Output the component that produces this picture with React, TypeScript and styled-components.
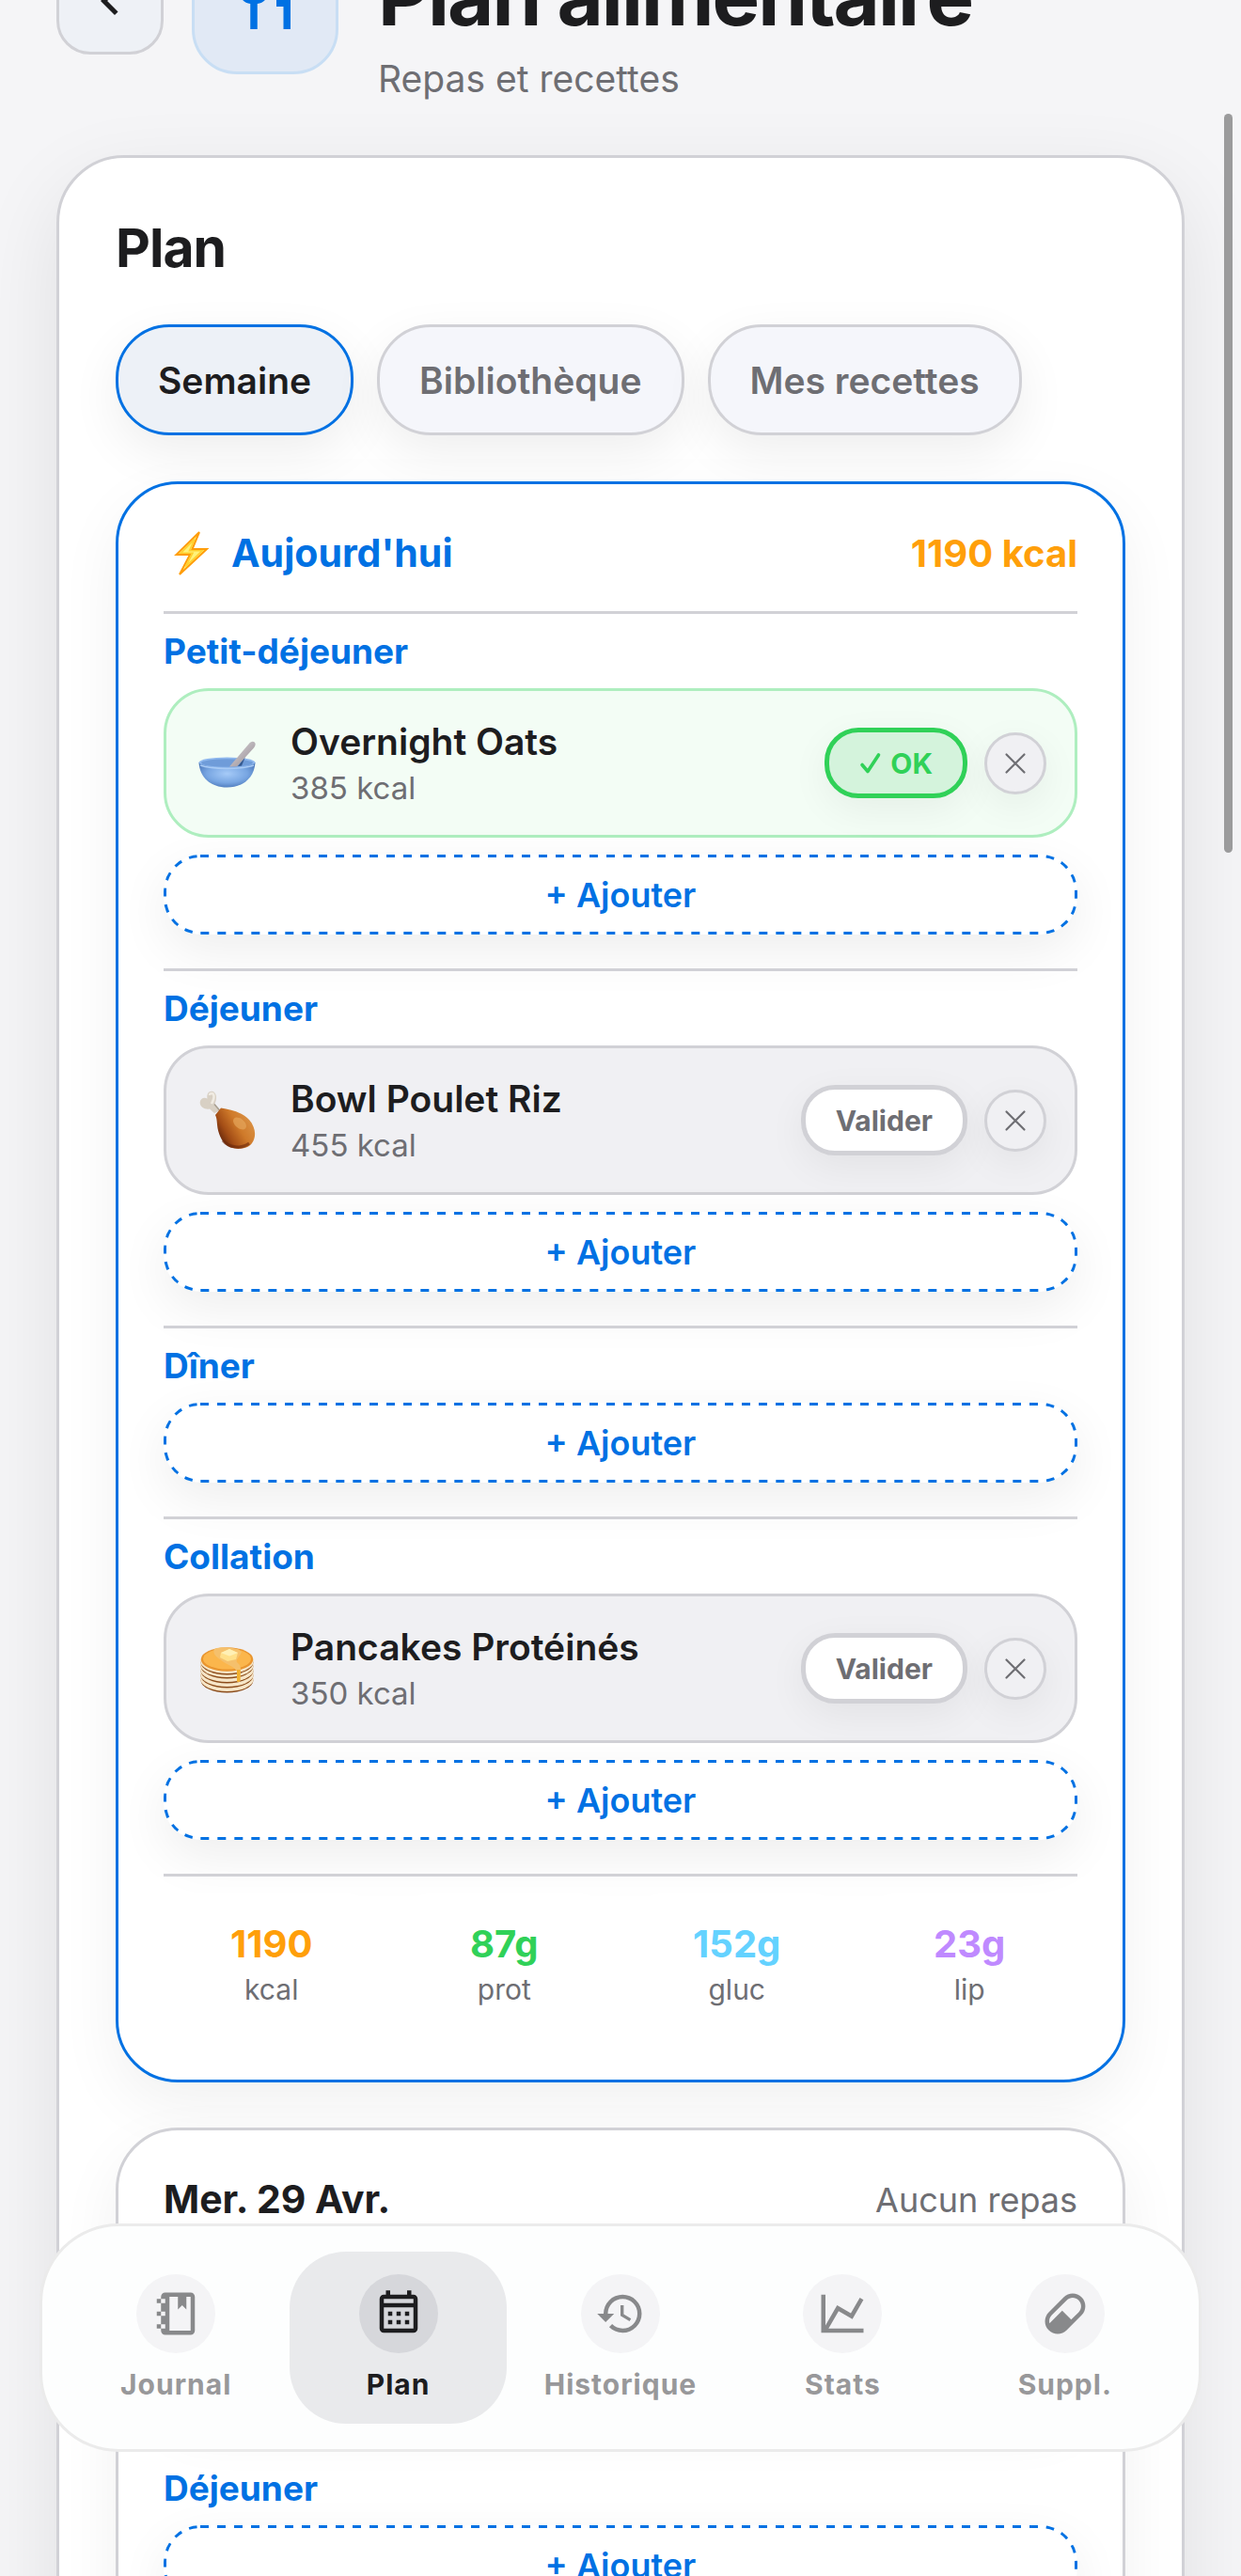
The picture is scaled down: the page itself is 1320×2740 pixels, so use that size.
import React, { useState } from 'react'
import styled, { createGlobalStyle, css } from 'styled-components'

type MealArt = 'bowl' | 'drumstick' | 'pancakes'

type Meal = {
    name: string
    kcal: number
    art: MealArt
    done: boolean
}

type Slot = {
    label: string
    meals: Meal[]
}

type Macro = {
    value: string
    unit: string
    color: string
}

const colors = {
    page: '#f5f5f7',
    blue: '#0071e3',
    green: '#30d158',
    orange: '#ff9f0a',
    text: '#1d1d1f',
    muted: '#6e6e73',
    border: '#d1d1d6',
    fill: '#f0f0f3',
}

const icons = {
    back: 'M15.41,16.58L10.83,12L15.41,7.41L14,6L8,12L14,18L15.41,16.58Z',
    silverware:
        'M11,9H9V2H7V9H5V2H3V9C3,11.12 4.66,12.84 6.75,12.97V22H9.25V12.97C11.34,12.84 13,11.12 13,9V2H11V9M16,6V14H18.5V22H21V2C18.24,2 16,4.24 16,6Z',
    notebook:
        'M3 7V5H5V4C5 2.9 5.9 2 7 2H19C20.1 2 21 2.9 21 4V20C21 21.1 20.1 22 19 22H7C5.9 22 5 21.1 5 20V19H3V17H5V13H3V11H5V7H3M5 5V7H7V5H5M5 19H7V17H5V19M5 13H7V11H5V13M17 4V10L15 8L13 10V4H9V20H19V4H17Z',
    calendar:
        'M7 11H9V13H7V11M21 5V19C21 20.11 20.11 21 19 21H5C3.89 21 3 20.1 3 19V5C3 3.9 3.9 3 5 3H6V1H8V3H16V1H18V3H19C20.11 3 21 3.9 21 5M5 7H19V5H5V7M19 19V9H5V19H19M15 13V11H17V13H15M11 13V11H13V13H11M7 15H9V17H7V15M15 17V15H17V17H15M11 17V15H13V17H11Z',
    history:
        'M13.5,8H12V13L16.28,15.54L17,14.33L13.5,12.25V8M13,3A9,9 0 0,0 4,12H1L4.96,16.03L9,12H6A7,7 0 0,1 13,5A7,7 0 0,1 20,12A7,7 0 0,1 13,19C11.07,19 9.32,18.21 8.06,16.94L6.64,18.36C8.27,20 10.5,21 13,21A9,9 0 0,0 22,12A9,9 0 0,0 13,3',
    chart: 'M16,11.78L20.24,4.45L21.97,5.45L16.74,14.5L10.23,10.75L5.46,19H22V21H2V3H4V17.54L9.5,8L16,11.78Z',
    pill: 'M4.22,11.29L11.29,4.22C13.64,1.88 17.43,1.88 19.78,4.22C22.12,6.56 22.12,10.36 19.78,12.71L12.71,19.78C10.36,22.12 6.56,22.12 4.22,19.78C1.88,17.43 1.88,13.64 4.22,11.29M5.64,12.71C4.59,13.75 4.24,15.24 4.6,16.57L10.59,10.59L14.83,14.83L18.36,11.29C19.93,9.73 19.93,7.2 18.36,5.64C16.8,4.07 14.27,4.07 12.71,5.64L5.64,12.71Z',
}

// native dashed borders give no control over the dash length
const dashedOutline = `url("data:image/svg+xml,%3Csvg xmlns='http://www.w3.org/2000/svg' width='100%25' height='100%25'%3E%3Crect width='100%25' height='100%25' fill='none' rx='39' ry='39' stroke='%230071e3' stroke-width='6' stroke-dasharray='9 9'/%3E%3C/svg%3E")`

const tabs = ['Semaine', 'Bibliothèque', 'Mes recettes']

const today: Slot[] = [
    {
        label: 'Petit-déjeuner',
        meals: [{ name: 'Overnight Oats', kcal: 385, art: 'bowl', done: true }],
    },
    {
        label: 'Déjeuner',
        meals: [{ name: 'Bowl Poulet Riz', kcal: 455, art: 'drumstick', done: false }],
    },
    { label: 'Dîner', meals: [] },
    {
        label: 'Collation',
        meals: [{ name: 'Pancakes Protéinés', kcal: 350, art: 'pancakes', done: false }],
    },
]

const emptyDay: Slot[] = ['Petit-déjeuner', 'Déjeuner', 'Dîner', 'Collation'].map(
    (label) => ({ label, meals: [] })
)

const macros: Macro[] = [
    { value: '1190', unit: 'kcal', color: colors.orange },
    { value: '87g', unit: 'prot', color: colors.green },
    { value: '152g', unit: 'gluc', color: '#64d2ff' },
    { value: '23g', unit: 'lip', color: '#bf8aff' },
]

const navItems = [
    { label: 'Journal', icon: icons.notebook },
    { label: 'Plan', icon: icons.calendar },
    { label: 'Historique', icon: icons.history },
    { label: 'Stats', icon: icons.chart },
    { label: 'Suppl.', icon: icons.pill },
]

function Icon({ path, size }: { path: string; size: number }) {
    return (
        <svg width={size} height={size} viewBox="0 0 24 24" fill="currentColor" aria-hidden>
            <path d={path} />
        </svg>
    )
}

function Bolt() {
    return (
        <svg width="60" height="60" viewBox="0 0 60 60" aria-hidden>
            <path
                d="M38 7L13.5 31H28L17 52L46 25H30.500Z"
                fill="#fff27a"
                stroke="#ff9d0a"
                strokeWidth="2"
                strokeLinejoin="miter"
            />
            <path
                d="M33 14.500L18.500 29.200H31L23.500 43.500L41 26.800H27.500Z"
                fill="none"
                stroke="#ffd02e"
                strokeWidth="1.600"
            />
        </svg>
    )
}

function Bowl() {
    return (
        <svg width="66" height="66" viewBox="0 0 66 66" aria-hidden>
            <defs>
                <radialGradient id="bowlBody" cx="0.5" cy="0.45" r="0.6">
                    <stop offset="0" stopColor="#a6cbf8" />
                    <stop offset="0.6" stopColor="#78a6e2" />
                    <stop offset="1" stopColor="#4a76b8" />
                </radialGradient>
                <linearGradient id="bowlSpoon" x1="0" y1="0" x2="1" y2="1">
                    <stop offset="0" stopColor="#dedcdf" />
                    <stop offset="1" stopColor="#93888f" />
                </linearGradient>
            </defs>
            <path d="M4.5 32C5.5 48 17 58.5 34.5 58.5S63.5 48 64.5 32Z" fill="url(#bowlBody)" />
            <ellipse cx="34.5" cy="32" rx="30" ry="5.5" fill="#8fb8ee" />
            <ellipse cx="34.5" cy="32.5" rx="27.5" ry="4.3" fill="#6f9cd9" />
            <path d="M46 36L54 26L50 35.5Z" fill="#35598f" />
            <path
                d="M37 36.5L57.5 12.5C59.5 9.8 62 9 63.8 10.5C65.3 12 64.6 14.5 63 16.5L45 36.3Z"
                fill="url(#bowlSpoon)"
            />
            <path d="M6 35C18 39.5 51 39.5 63 35" fill="none" stroke="#a9cbf5" strokeWidth="1.5" />
        </svg>
    )
}

function Drumstick() {
    return (
        <svg width="66" height="66" viewBox="0 0 66 66" aria-hidden>
            <defs>
                <linearGradient id="drumMeat" x1="0.05" y1="0.75" x2="0.85" y2="0.25">
                    <stop offset="0" stopColor="#5c210a" />
                    <stop offset="0.3" stopColor="#a34d16" />
                    <stop offset="0.65" stopColor="#cf7a2a" />
                    <stop offset="1" stopColor="#d98f42" />
                </linearGradient>
            </defs>
            <path
                d="M21 25L16 20.5C11 21.5 5.5 18.5 5.7 13.5C6 9.5 10 7.5 13.5 9.5C12.5 4 15.5 1 19 1.8C23.5 3 24.5 10 21 16L27 22Z"
                fill="#d8d0c4"
            />
            <path d="M16 6C16 3.5 20 3 20.5 7C20.8 10 19 13 18 15" fill="none" stroke="#f0ebe2" strokeWidth="2.5" />
            <path d="M21 15.5L27 22.5" stroke="#a69c8d" strokeWidth="1.5" />
            <path
                d="M22 27L28 19.5C39 21 51 24.5 58 32C65 40 66 50 61 57C56 63.5 46 64 38 61.5C30 58 26 49 24.5 41C23.5 35 24 31 22 27Z"
                fill="url(#drumMeat)"
            />
            <path
                d="M30 54C36 61.5 50 63.5 58 57"
                fill="none"
                stroke="#6b280c"
                strokeOpacity="0.6"
                strokeWidth="3"
            />
            <ellipse cx="48" cy="36" rx="8" ry="5" transform="rotate(40 48 36)" fill="#e8ab62" fillOpacity="0.6" />
        </svg>
    )
}

function Pancakes() {
    return (
        <svg width="66" height="66" viewBox="0 0 66 66" aria-hidden>
            {[45, 40, 35, 30, 26].map((cy) => (
                <g key={cy}>
                    <ellipse cx="34.5" cy={cy} rx="28" ry="13.5" fill="#8c4c1a" />
                    <ellipse cx="34.5" cy={cy - 1} rx="28.3" ry="13" fill="#f6e6c8" />
                </g>
            ))}
            <ellipse cx="34.5" cy="23" rx="27.8" ry="12.8" fill="#e9952f" />
            <ellipse cx="34.5" cy="22.5" rx="25.5" ry="11" fill="#fbb64c" />
            <path
                d="M21 12C26 9 46 10 50 15C48 21 42 24 46 27C50 30 49 34 48.5 45C48 48 45 48 45 45V36C42 30 34 29 27 23C22 20 19 16 21 12Z"
                fill="#f5c06c"
            />
            <path d="M45 34V45C45 48 48.5 48 48.5 45V34Z" fill="#f2b12f" />
            <path d="M28 16L37 12L46 16L44 23L35 25L27 21Z" fill="#ffe08a" />
            <path d="M28 16L37 12L46 16L37 19.5Z" fill="#fff0b5" />
        </svg>
    )
}

const mealArt: { [key in MealArt]: () => React.JSX.Element } = {
    bowl: Bowl,
    drumstick: Drumstick,
    pancakes: Pancakes,
}

function MealRow({ meal }: { meal: Meal }) {
    const [done, setDone] = useState(meal.done)
    const Art = mealArt[meal.art]

    return (
        <Row $done={done}>
            <Art />
            <MealText>
                <MealName>{meal.name}</MealName>
                <MealKcal>{meal.kcal} kcal</MealKcal>
            </MealText>
            <Actions>
                <ValidateButton type="button" $done={done} onClick={() => setDone(!done)}>
                    {done && (
                        <svg width="24" height="24" viewBox="0 0 24 24" fill="none" aria-hidden>
                            <path
                                d="M3 13.5L9 20.5L20.5 3"
                                stroke="currentColor"
                                strokeWidth="3.6"
                                strokeLinecap="round"
                                strokeLinejoin="round"
                            />
                        </svg>
                    )}
                    {done ? 'OK' : 'Valider'}
                </ValidateButton>
                <RemoveButton type="button" aria-label={`Retirer ${meal.name}`}>
                    <svg width="24" height="24" viewBox="0 0 24 24" fill="none" aria-hidden>
                        <path
                            d="M2.5 2.5L21.5 21.5M21.5 2.5L2.5 21.5"
                            stroke="currentColor"
                            strokeWidth="2.2"
                            strokeLinecap="round"
                        />
                    </svg>
                </RemoveButton>
            </Actions>
        </Row>
    )
}

function MealSlot({ slot }: { slot: Slot }) {
    return (
        <Section>
            <SlotTitle>{slot.label}</SlotTitle>
            {slot.meals.map((meal) => (
                <MealRow key={meal.name} meal={meal} />
            ))}
            <AddButton type="button">+ Ajouter</AddButton>
        </Section>
    )
}

function App() {
    const [tab, setTab] = useState(tabs[0])

    return (
        <>
            <GlobalStyle />
            <Screen>
                <Header>
                    <BackButton type="button" aria-label="Retour">
                        <Icon path={icons.back} size={60} />
                    </BackButton>
                    <HeaderBadge>
                        <Icon path={icons.silverware} size={72} />
                    </HeaderBadge>
                    <HeaderText>
                        <PageTitle>Plan alimentaire</PageTitle>
                        <PageSubtitle>Repas et recettes</PageSubtitle>
                    </HeaderText>
                </Header>

                <PlanCard>
                    <CardTitle>Plan</CardTitle>
                    <Tabs>
                        {tabs.map((name) => (
                            <Tab
                                key={name}
                                type="button"
                                $active={name === tab}
                                onClick={() => setTab(name)}
                            >
                                {name}
                            </Tab>
                        ))}
                    </Tabs>

                    <Days>
                        <DayCard $today>
                            <DayHeader>
                                <DayTitle $today>
                                    <Bolt />
                                    Aujourd'hui
                                </DayTitle>
                                <DayTotal>1190 kcal</DayTotal>
                            </DayHeader>
                            {today.map((slot) => (
                                <MealSlot key={slot.label} slot={slot} />
                            ))}
                            <Macros>
                                {macros.map(({ value, unit, color }) => (
                                    <MacroBox key={unit}>
                                        <MacroValue $color={color}>{value}</MacroValue>
                                        <MacroUnit>{unit}</MacroUnit>
                                    </MacroBox>
                                ))}
                            </Macros>
                        </DayCard>

                        <DayCard>
                            <DayHeader>
                                <DayTitle>Mer. 29 Avr.</DayTitle>
                                <DayEmpty>Aucun repas</DayEmpty>
                            </DayHeader>
                            {emptyDay.map((slot) => (
                                <MealSlot key={slot.label} slot={slot} />
                            ))}
                        </DayCard>
                    </Days>
                </PlanCard>
            </Screen>

            <ScrollThumb />

            <BottomNav>
                {navItems.map(({ label, icon }) => (
                    <NavItem key={label} href={`#${label}`} $active={label === 'Plan'}>
                        <NavIcon $active={label === 'Plan'}>
                            <Icon path={icon} size={54} />
                        </NavIcon>
                        {label}
                    </NavItem>
                ))}
            </BottomNav>
        </>
    )
}

export default App

const GlobalStyle = createGlobalStyle`
    * {
        box-sizing: border-box;
    }

    body {
        margin: 0;
        overflow: hidden;
        background: ${colors.page};
        color: ${colors.text};
        font-family: Inter, 'Liberation Sans', sans-serif;
    }

    button {
        margin: 0;
        font-family: inherit;
        cursor: pointer;
    }

    h1, h2, h3, h4, p {
        margin: 0;
    }

    svg {
        display: block;
        flex-shrink: 0;
    }
`

const Screen = styled.main`
    height: 100vh;
    overflow: hidden;
    padding: 0 60px;
`

/* starts scrolled partly out of view */
const Header = styled.header`
    display: flex;
    align-items: center;
    gap: 30px;
    height: 220px;
    margin-top: -109px;
    margin-bottom: 54px;
`

const BackButton = styled.button`
    display: flex;
    align-items: center;
    justify-content: center;
    width: 114px;
    height: 114px;
    padding: 0;
    border: 3px solid ${colors.border};
    border-radius: 36px;
    background: #eef1f6;
    color: ${colors.text};
`

const HeaderBadge = styled.div`
    display: flex;
    align-items: center;
    justify-content: center;
    width: 156px;
    height: 156px;
    border: 3px solid #c8def4;
    border-radius: 48px;
    background: #e1e9f5;
    color: ${colors.blue};
`

const HeaderText = styled.div`
    display: flex;
    flex-direction: column;
    align-self: flex-end;
    gap: 12px;
    padding-left: 12px;
`

const PageTitle = styled.h1`
    font-size: 85px;
    line-height: 96px;
    font-weight: 700;
    letter-spacing: -2px;
`

const PageSubtitle = styled.p`
    font-size: 39px;
    line-height: 54px;
    color: ${colors.muted};
`

const PlanCard = styled.section`
    padding: 60px;
    border: 3px solid ${colors.border};
    border-radius: 72px;
    background: #fff;
    box-shadow: 0 30px 90px rgba(0, 0, 0, 0.09);
`

const CardTitle = styled.h2`
    font-size: 57px;
    line-height: 72px;
    font-weight: 700;
    letter-spacing: -1px;
`

const Tabs = styled.div`
    display: flex;
    gap: 25px;
    margin-top: 45px;
`

const Tab = styled.button<{ $active: boolean }>`
    height: 118px;
    padding: 0 42px;
    border: 3px solid ${({ $active }) => ($active ? colors.blue : colors.border)};
    border-radius: 57px;
    background: ${({ $active }) => ($active ? '#edf1f7' : '#f5f6fb')};
    box-shadow: 0 18px 54px rgba(0, 0, 0, 0.07);
    color: ${({ $active }) => ($active ? colors.text : colors.muted)};
    font-size: 39px;
    font-weight: 600;
`

const Days = styled.div`
    display: flex;
    flex-direction: column;
    gap: 48px;
    margin-top: 49px;
`

const DayCard = styled.article<{ $today?: boolean }>`
    padding: 48px;
    border: 3px solid ${({ $today }) => ($today ? colors.blue : colors.border)};
    border-radius: 66px;
    background: #fff;
    box-shadow: 0 24px 66px rgba(0, 0, 0, 0.06);
`

const DayHeader = styled.header`
    display: flex;
    align-items: center;
    justify-content: space-between;
    height: 51px;
    margin-bottom: 36px;
`

const DayTitle = styled.h3<{ $today?: boolean }>`
    display: flex;
    align-items: center;
    gap: 12px;
    color: ${({ $today }) => ($today ? colors.blue : colors.text)};
    font-size: 41px;
    line-height: 51px;
    font-weight: 700;
`

const DayTotal = styled.span`
    color: ${colors.orange};
    font-size: 40px;
    font-weight: 700;
`

const DayEmpty = styled.span`
    color: ${colors.muted};
    font-size: 36px;
`

const Section = styled.section`
    padding: 18px 0 36px;
    border-top: 3px solid ${colors.border};
`

const SlotTitle = styled.h4`
    margin-bottom: 18px;
    color: ${colors.blue};
    font-size: 37px;
    line-height: 43px;
    font-weight: 700;
`

const Row = styled.div<{ $done: boolean }>`
    display: flex;
    align-items: center;
    gap: 36px;
    height: 159px;
    margin-bottom: 18px;
    padding: 0 30px;
    border: 3px solid ${({ $done }) => ($done ? '#aeeebf' : colors.border)};
    border-radius: 48px;
    background: ${({ $done }) => ($done ? '#f3fdf5' : colors.fill)};
`

const MealText = styled.div`
    flex: 1;
    display: flex;
    flex-direction: column;
    gap: 6px;
`

const MealName = styled.span`
    font-size: 39px;
    line-height: 48px;
    font-weight: 600;
`

const MealKcal = styled.span`
    color: ${colors.muted};
    font-size: 33px;
    line-height: 39px;
`

const Actions = styled.div`
    display: flex;
    align-items: center;
    gap: 18px;
`

const ValidateButton = styled.button<{ $done: boolean }>`
    display: flex;
    align-items: center;
    gap: 9px;
    height: 75px;
    padding: 0 32px;
    border: 5px solid ${colors.border};
    border-radius: 36px;
    background: #fff;
    box-shadow: 0 12px 42px rgba(0, 0, 0, 0.06);
    color: ${colors.muted};
    font-size: 30px;
    font-weight: 700;

    ${({ $done }) =>
        $done &&
        css`
            border-color: ${colors.green};
            background: #d4f3dc;
            color: ${colors.green};
        `}
`

const RemoveButton = styled.button`
    display: flex;
    align-items: center;
    justify-content: center;
    width: 66px;
    height: 66px;
    padding: 0;
    border: 3px solid ${colors.border};
    border-radius: 50%;
    background: ${colors.fill};
    box-shadow: 0 12px 42px rgba(0, 0, 0, 0.06);
    color: ${colors.muted};
`

const AddButton = styled.button`
    display: block;
    width: 100%;
    height: 85px;
    border: 0;
    border-radius: 39px;
    background: #fff ${dashedOutline};
    box-shadow: 0 18px 54px rgba(0, 0, 0, 0.07);
    color: ${colors.blue};
    font-size: 36px;
    font-weight: 600;
`

const Macros = styled.div`
    display: grid;
    grid-template-columns: repeat(4, 1fr);
    gap: 18px;
    padding-top: 18px;
    border-top: 3px solid ${colors.border};
`

const MacroBox = styled.div`
    display: flex;
    flex-direction: column;
    align-items: center;
    gap: 6px;
    padding: 30px 0;
    border-radius: 36px;
    background: #fff;
`

const MacroValue = styled.span<{ $color: string }>`
    color: ${({ $color }) => $color};
    font-size: 40px;
    line-height: 48px;
    font-weight: 700;
`

const MacroUnit = styled.span`
    color: ${colors.muted};
    font-size: 30px;
    line-height: 36px;
`

const ScrollThumb = styled.div`
    position: fixed;
    top: 121px;
    right: 9px;
    width: 9px;
    height: 786px;
    border-radius: 5px;
    background: #9b9b9c;
`

const BottomNav = styled.nav`
    position: fixed;
    right: 42px;
    bottom: 132px;
    left: 42px;
    display: grid;
    grid-template-columns: repeat(5, 1fr);
    gap: 6px;
    padding: 27px;
    border: 3px solid #ebebeb;
    border-radius: 84px;
    background: #fdfefe;
`

const NavItem = styled.a<{ $active: boolean }>`
    display: flex;
    flex-direction: column;
    align-items: center;
    gap: 15px;
    padding: 24px 0;
    border-radius: 60px;
    background: ${({ $active }) => ($active ? '#e9eaec' : 'transparent')};
    color: ${({ $active }) => ($active ? colors.text : '#98989a')};
    font-size: 30px;
    line-height: 36px;
    font-weight: 700;
    letter-spacing: 1px;
    text-decoration: none;
`

const NavIcon = styled.span<{ $active: boolean }>`
    display: flex;
    align-items: center;
    justify-content: center;
    width: 84px;
    height: 84px;
    border-radius: 50%;
    background: ${({ $active }) => ($active ? '#d6d7db' : '#f4f4f6')};
    color: ${({ $active }) => ($active ? colors.text : '#88898b')};
`
